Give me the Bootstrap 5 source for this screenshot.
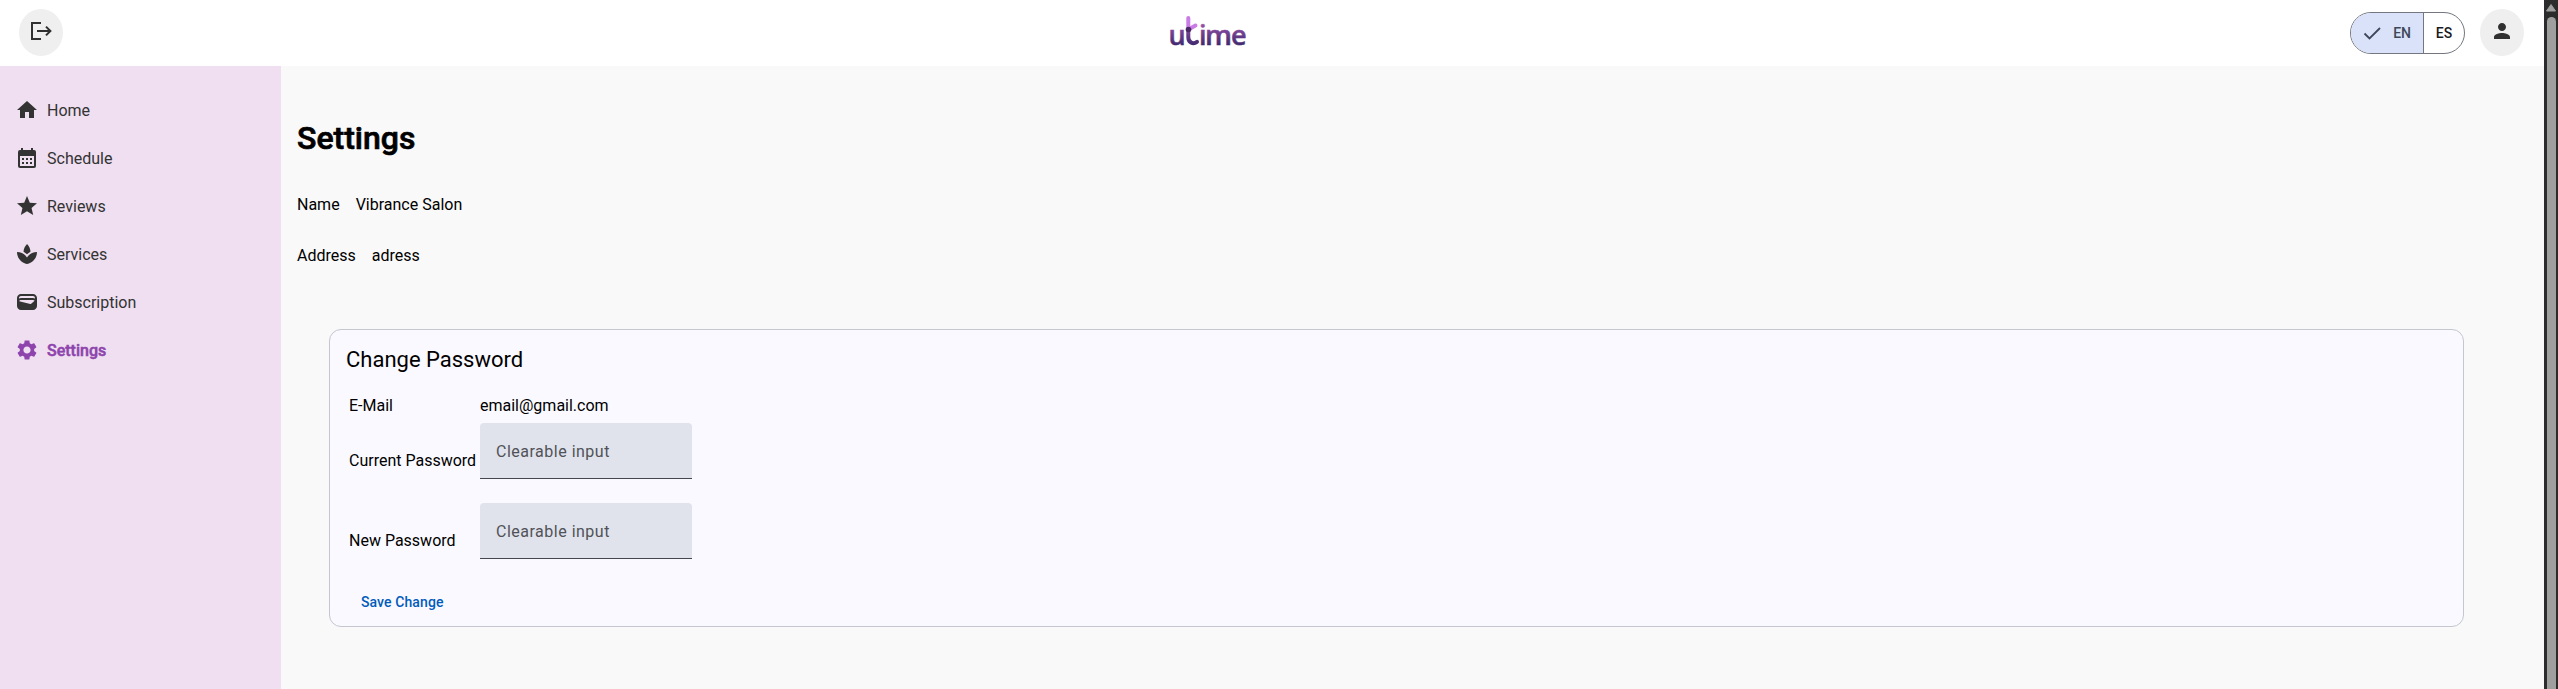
<!DOCTYPE html>
<html lang="en">
<head>
<meta charset="utf-8">
<title>utime - Settings</title>
<link href="https://cdn.jsdelivr.net/npm/bootstrap@5.3.0/dist/css/bootstrap.min.css" rel="stylesheet">
<style>
body{font-family:Roboto,sans-serif;font-size:16px;line-height:24px;color:#000;background:#f9f9f9;height:100vh;overflow:hidden}
.page-col{min-width:0}
.topbar{height:66px;background:#fff;padding:9px 20px 10px 19px}
.topbar-side{flex:1 1 0}
.brand-logo{margin-right:128px;overflow:visible}
.round-btn{width:44px;height:47px;border-radius:50%;background:#efefef;border:0;padding:0;color:#303030}
.round-btn svg{margin-top:-3px}
.lang-toggle{width:115px;height:42px;border:1px solid #74777f;border-radius:21px;overflow:hidden;font-size:14px;font-weight:500;margin-right:15px;margin-top:3px}
.lang-on{width:73px;background:#dae2f9;color:#3e4759;border-right:1px solid #74777f;padding:0 12px 1px 12px}
.lang-off{color:#1a1b1f;padding-bottom:1px}
.side-menu{width:281px;background:#efdff0;padding:20px 0 0 15px}
.side-menu .nav-link{height:48px;padding:0;gap:8px;color:#333}
.side-menu .nav-link span{padding-top:1px}
.side-menu .nav-link.active{color:#8e44ad;font-weight:500;-webkit-text-stroke:.5px}
.main-area{padding:53px 16px 0}
h1{font-size:32px;font-weight:500;-webkit-text-stroke:.7px;line-height:38px;margin:0 0 36px}
.info-row{gap:16px;margin-bottom:27px}
.pw-card{margin:61px 64px 0 32px;height:298px;border:1px solid #c4c6d0;border-radius:12px;background:#faf9ff;padding:16px}
.pw-title{font-size:22px;line-height:28px;margin-bottom:20px}
.pw-grid{display:grid;grid-template-columns:129px 212px;column-gap:2px;padding-left:3px}
.pw-grid label{padding-top:25px}
.pw-grid label + input{margin-top:5px}
.pw-grid .row-next{padding-top:43px}
.pw-grid .row-next + input{margin-top:24px}
.clear-input{height:56px;background:#e0e2ec;border:0;border-bottom:1px solid #44474e;border-radius:4px 4px 0 0;padding:2px 16px 0;letter-spacing:.5px;color:#44474e;font-size:16px;width:212px}
.clear-input::placeholder{color:#505257;opacity:1}
.save-btn{font-size:14px;font-weight:500;letter-spacing:.1px;color:#005cbb;border:0;background:none;padding:0 15px;line-height:20px;margin-top:33px}
.scroll-rail{width:14px;background:#2c2c2c}
</style>
</head>
<body class="d-flex">
<div class="page-col d-flex flex-column flex-grow-1">
  <header class="topbar d-flex align-items-start">
    <div class="topbar-side d-flex">
      <button class="round-btn d-flex align-items-center justify-content-center" aria-label="Log out">
        <svg width="24" height="24" viewBox="0 0 24 24" fill="none" stroke="currentColor" stroke-width="2"><path d="M12 4H3v16h9M8 12h13M17 7.600l4.400 4.400-4.400 4.400"/></svg>
      </button>
    </div>
    <svg class="brand-logo" width="80" height="40" viewBox="1168 9 80 40" role="img" aria-label="utime">
      <defs><linearGradient id="ink" gradientUnits="userSpaceOnUse" x1="0" y1="25" x2="0" y2="46"><stop offset="0" stop-color="#9350a6"/><stop offset="1" stop-color="#3c276c"/></linearGradient></defs>
      <g fill="url(#ink)" stroke="url(#ink)" stroke-width=".5" font-family="Open Sans, sans-serif" font-weight="600" font-size="27"><text x="1168.500" y="45">u</text><text x="1199" y="45">i</text><text x="1205" y="45" textLength="27" lengthAdjust="spacingAndGlyphs">m</text><text x="1231" y="45">e</text></g>
      <g fill="none" stroke-linecap="round"><path d="M1188.300 18v11M1188.300 29.500l7.200-4" stroke="#cb7be6" stroke-width="4"/><path d="M1188.300 30v7c0 6 5 7.500 8.700 4.800" stroke="url(#ink)" stroke-width="4"/></g><circle cx="1188.500" cy="29.500" r="2.800" fill="#4b2866"/>
    </svg>
    <div class="topbar-side d-flex justify-content-end">
      <div class="lang-toggle d-flex">
        <div class="lang-on d-flex align-items-center justify-content-between"><svg width="18" height="18" viewBox="0 0 18 18" fill="none" stroke="currentColor" stroke-width="1.800" overflow="visible"><path d="M1.500 9.500l5 5L17 4"/></svg><span>EN</span></div>
        <div class="lang-off d-flex align-items-center justify-content-center flex-grow-1">ES</div>
      </div>
      <button class="round-btn d-flex align-items-center justify-content-center" aria-label="Account">
        <svg width="24" height="24" viewBox="0 0 24 24" fill="currentColor"><path d="M12 12c2.210 0 4-1.790 4-4s-1.790-4-4-4-4 1.790-4 4 1.790 4 4 4zm0 2c-2.670 0-8 1.340-8 4v2h16v-2c0-2.660-5.330-4-8-4z"/></svg>
      </button>
    </div>
  </header>
  <div class="d-flex flex-grow-1">
    <nav class="side-menu nav flex-column flex-nowrap flex-shrink-0">
      <a class="nav-link d-flex align-items-center"><svg width="24" height="24" viewBox="0 0 24 24" fill="currentColor"><path d="M10 20v-6h4v6h5v-8h3L12 3 2 12h3v8z"/></svg><span>Home</span></a>
      <a class="nav-link d-flex align-items-center"><svg width="24" height="24" viewBox="0 0 24 24" fill="currentColor" fill-rule="evenodd"><path d="M19 4h-1V2h-2v2H8V2H6v2H5a2 2 0 0 0-2 2v14a2 2 0 0 0 2 2h14a2 2 0 0 0 2-2V6a2 2 0 0 0-2-2zm0 16H5V10h14v10z"/><path d="M7 12h2v2H7zm4 0h2v2h-2zm4 0h2v2h-2zM7 16h2v2H7zm4 0h2v2h-2zm4 0h2v2h-2z"/></svg><span>Schedule</span></a>
      <a class="nav-link d-flex align-items-center"><svg width="24" height="24" viewBox="0 0 24 24" fill="currentColor"><path d="M12 17.270L18.180 21l-1.640-7.030L22 9.240l-7.190-.61L12 2 9.190 8.630 2 9.240l5.460 4.730L5.820 21z"/></svg><span>Reviews</span></a>
      <a class="nav-link d-flex align-items-center"><svg width="24" height="24" viewBox="0 0 24 24" fill="currentColor"><path d="M15.490 9.630c-.18-2.790-1.310-5.510-3.430-7.630-2.140 2.140-3.320 4.860-3.550 7.630 1.280.68 2.460 1.560 3.490 2.630 1.030-1.060 2.210-1.940 3.490-2.630zM12 15.450C9.850 12.170 6.180 10 2 10c0 5.320 3.360 9.820 8.030 11.490.63.23 1.290.4 1.970.51.68-.12 1.330-.29 1.970-.51C18.640 19.820 22 15.320 22 10c-4.180 0-7.850 2.170-10 5.450z"/></svg><span>Services</span></a>
      <a class="nav-link d-flex align-items-center"><svg width="24" height="24" viewBox="0 0 24 24" fill="currentColor"><path d="M18 4H6c-2.210 0-4 1.790-4 4v8c0 2.210 1.790 4 4 4h12c2.210 0 4-1.790 4-4V8c0-2.210-1.790-4-4-4zm-1.860 9.770c-.24.2-.57.280-.88.200L4.150 11.250C4.450 10.520 5.160 10 6 10h12c.67 0 1.260.34 1.630.84l-3.490 2.930zM6 6h12c1.100 0 2 .9 2 2v.55c-.59-.34-1.270-.55-2-.55H6c-.73 0-1.410.21-2 .55V8c0-1.100.9-2 2-2z"/></svg><span>Subscription</span></a>
      <a class="nav-link active d-flex align-items-center"><svg width="24" height="24" viewBox="0 0 24 24" fill="currentColor"><path d="M19.140 12.940c.04-.3.060-.61.060-.94 0-.32-.020-.64-.070-.94l2.030-1.580c.18-.14.230-.41.120-.61l-1.920-3.320c-.12-.22-.37-.29-.59-.22l-2.390.96c-.5-.38-1.030-.7-1.620-.94l-.36-2.540c-.04-.24-.24-.41-.48-.41h-3.840c-.24 0-.43.17-.47.410l-.36 2.540c-.59.24-1.130.57-1.620.94l-2.390-.96c-.22-.08-.47 0-.59.220L2.740 8.870c-.12.210-.08.470.12.610l2.030 1.580c-.05.300-.09.630-.09.940s.02.640.07.940l-2.030 1.580c-.18.14-.23.410-.12.610l1.920 3.320c.12.220.37.290.59.220l2.390-.96c.5.38 1.030.7 1.620.94l.36 2.540c.05.240.24.410.48.410h3.840c.24 0 .44-.17.470-.41l.36-2.540c.59-.24 1.130-.56 1.620-.94l2.390.96c.22.080.47 0 .59-.22l1.920-3.320c.12-.22.070-.47-.12-.61l-2.010-1.580zM12 15.600c-1.980 0-3.600-1.620-3.600-3.600s1.620-3.600 3.600-3.600 3.600 1.620 3.600 3.600-1.620 3.600-3.600 3.600z"/></svg><span>Settings</span></a>
    </nav>
    <main class="main-area flex-grow-1">
      <h1>Settings</h1>
      <div class="info-row d-flex"><span>Name</span><span>Vibrance Salon</span></div>
      <div class="info-row d-flex"><span>Address</span><span>adress</span></div>
      <section class="pw-card">
        <div class="pw-title">Change Password</div>
        <div class="pw-grid">
          <span>E-Mail</span><span>email@gmail.com</span>
          <label class="align-self-center" for="cur">Current Password</label><input class="clear-input" id="cur" placeholder="Clearable input">
          <label class="align-self-center row-next" for="new">New Password</label><input class="clear-input" id="new" placeholder="Clearable input">
        </div>
        <button class="save-btn">Save Change</button>
      </section>
    </main>
  </div>
</div>
<aside class="scroll-rail flex-shrink-0" aria-hidden="true"><svg class="d-block" width="14" height="689"><path d="M7 4.500L11.500 11H2.500z" fill="#9f9f9f" stroke="#9f9f9f" stroke-linejoin="round"/><rect x="3" y="17" width="9" height="690" rx="4.500" fill="#9f9f9f"/></svg></aside>
<script src="https://cdn.jsdelivr.net/npm/bootstrap@5.3.0/dist/js/bootstrap.bundle.min.js"></script>
</body>
</html>
